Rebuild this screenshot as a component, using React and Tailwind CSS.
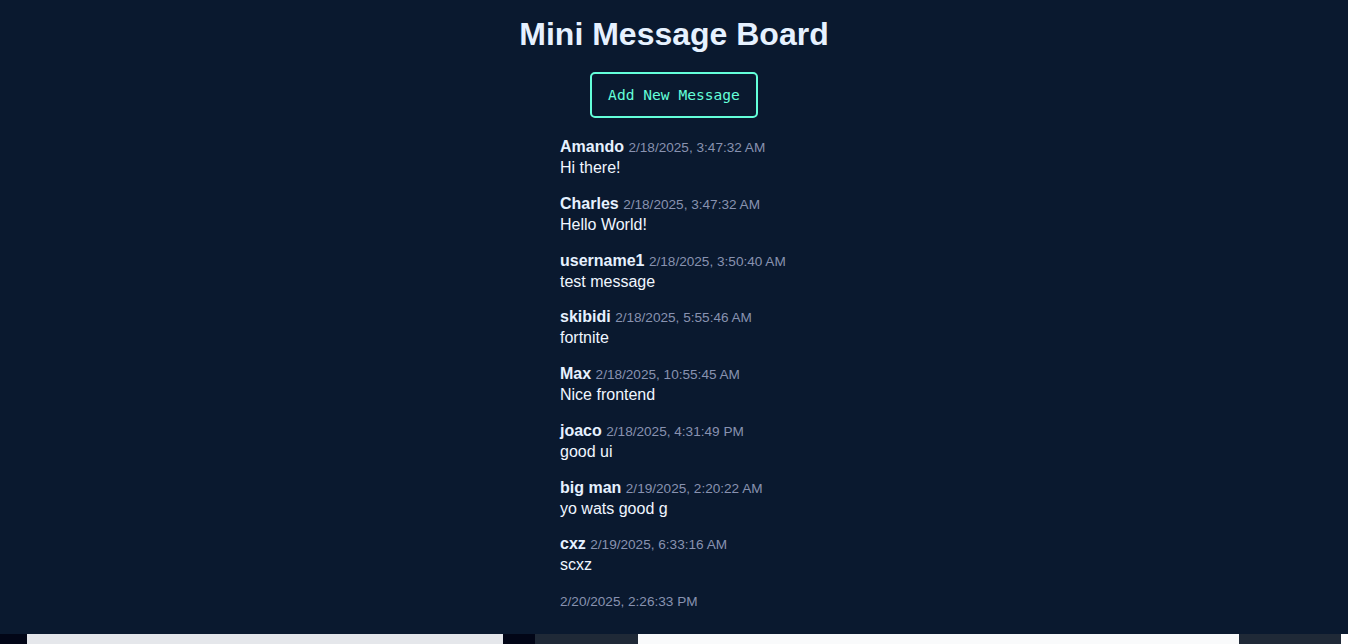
import React from "react";

const messages = [
  { user: "Amando", date: "2/18/2025, 3:47:32 AM", text: "Hi there!" },
  { user: "Charles", date: "2/18/2025, 3:47:32 AM", text: "Hello World!" },
  { user: "username1", date: "2/18/2025, 3:50:40 AM", text: "test message" },
  { user: "skibidi", date: "2/18/2025, 5:55:46 AM", text: "fortnite" },
  { user: "Max", date: "2/18/2025, 10:55:45 AM", text: "Nice frontend" },
  { user: "joaco", date: "2/18/2025, 4:31:49 PM", text: "good ui" },
  { user: "big man", date: "2/19/2025, 2:20:22 AM", text: "yo wats good g" },
  { user: "cxz", date: "2/19/2025, 6:33:16 AM", text: "scxz" },
  { user: "", date: "2/20/2025, 2:26:33 PM", text: "" },
];

export default function App() {
  return (
    <div
      className="w-full h-[644px] overflow-hidden bg-[#0a192f] flex flex-col"
      style={{ fontFamily: '"Liberation Sans", Arial, sans-serif' }}
    >
      <main className="h-[634px] flex flex-col items-center">
        <h1 className="mt-[16px] text-[32px] leading-[36px] font-bold text-[#e6f1ff]">
          Mini Message Board
        </h1>
        <button
          className="mt-[20px] box-border w-[168px] border-2 border-[#64ffda] rounded-[5px] text-[#64ffda] text-[14.6px] leading-[18px] py-[12px] text-center"
          style={{ fontFamily: '"DejaVu Sans Mono", "Liberation Mono", monospace' }}
        >
          Add New Message
        </button>
        <ul className="mt-[19px] w-[228px] list-none">
          {messages.map((m, i) => (
            <li key={i} className="mb-[16.75px]">
              <div className="h-[20px] leading-[20px] whitespace-nowrap">
                {m.user && (
                  <span className="font-bold text-[16px] text-[#e6f1ff]">{m.user} </span>
                )}
                <span className="text-[13.6px] text-[#8892b0]">{m.date}</span>
              </div>
              <div className="h-[20px] leading-[22px] text-[16px] text-[#f0f6ff]">{m.text}</div>
            </li>
          ))}
        </ul>
      </main>
      <div className="h-[10px] flex shrink-0">
        <div className="w-[27px] bg-[#020617]" />
        <div className="w-[476px] bg-[#e5e7eb]" />
        <div className="w-[32px] bg-[#020617]" />
        <div className="w-[103px] bg-[#1f2937]" />
        <div className="w-[601px] bg-[#f9fafb]" />
        <div className="w-[102px] bg-[#1f2937]" />
        <div className="flex-1 bg-white" />
      </div>
    </div>
  );
}
